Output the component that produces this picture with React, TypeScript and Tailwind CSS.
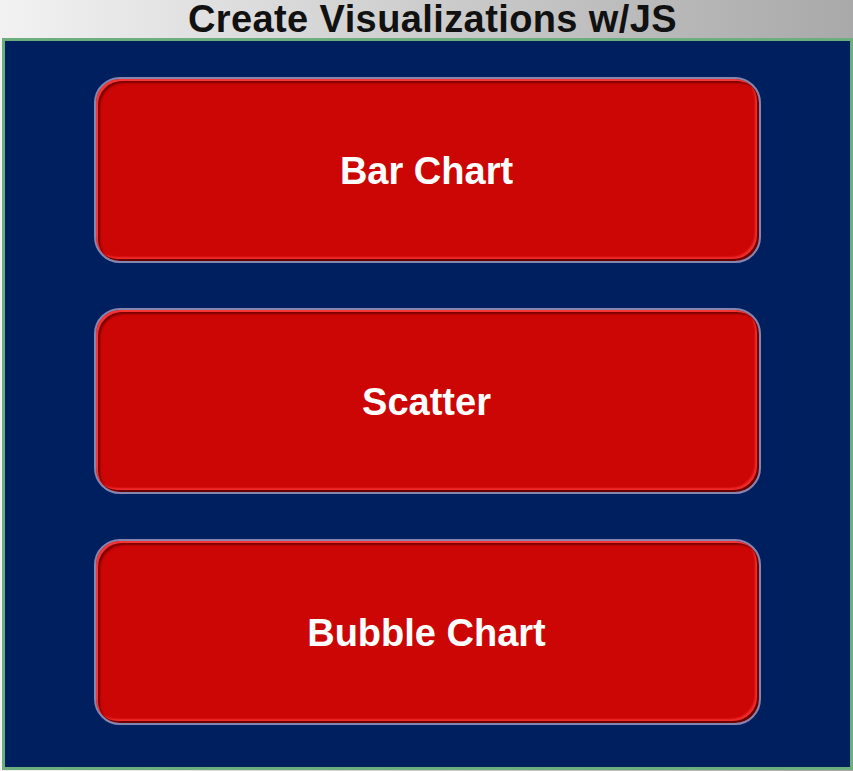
const items = ["Bar Chart", "Scatter", "Bubble Chart"];

export default function App() {
    return (
        <div className="w-[853px] h-[771px] flex flex-col bg-gradient-to-r from-[#f2f2f2] to-[#a9a9a9] font-['Liberation_Sans',Arial,sans-serif]">
            <header className="h-[38px] flex items-start justify-center">
                <h1 className="text-[38px] leading-none font-bold text-[#111] pl-[12px] tracking-[0.4px]">
                    Create Visualizations w/JS
                </h1>
            </header>
            <main className="ml-[2px] w-[851px] h-[732px] border-[3px] border-[#6cae7e] bg-[#001f5f] flex flex-col items-center pt-[36px] gap-[45px]">
                {items.map((label) => (
                    <button
                        key={label}
                        className="w-[667px] h-[186px] rounded-[26px] border-[2px] border-[#8586b0] bg-[#cc0605] text-white text-[38px] font-bold shadow-[inset_2px_2px_0_#f83434,inset_-2px_-2px_0_#6a0000,inset_4px_4px_2px_#7a0000,inset_-4px_-4px_2px_#f02c2c] mx-auto pr-[2px] pt-[2px]"
                    >
                        {label}
                    </button>
                ))}
            </main>
        </div>
    )
}
